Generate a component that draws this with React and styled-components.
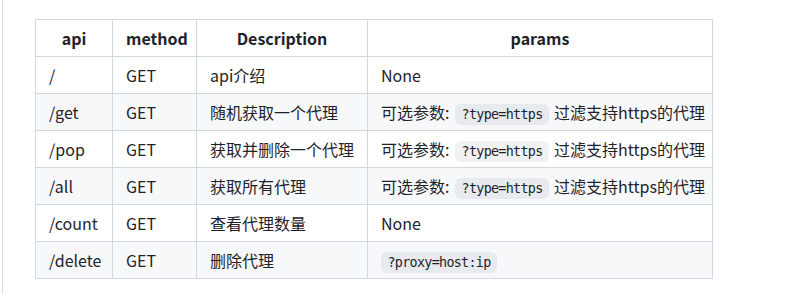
import React from "react";
import styled, { createGlobalStyle } from "styled-components";

const GlobalStyle = createGlobalStyle`
  html, body {
    margin: 0;
    background: #ffffff;
  }
  body {
    font-family: "Noto Sans CJK SC", "Noto Sans", sans-serif;
    color: #1f2328;
  }
`;

const Page = styled.div`
  height: 294px;
  margin-left: 2px;
  border-left: 1px solid #dcdcdc;
  padding: 19px 0 0 32px;
  box-sizing: border-box;
`;

const Table = styled.table`
  border-collapse: collapse;
  border-spacing: 0;
  table-layout: fixed;
  width: 677px;
  font-size: 16px;
  line-height: 24px;

  tbody tr:nth-child(2n) {
    background: #f6f8fa;
  }
`;

const HeadCell = styled.th`
  box-sizing: border-box;
  width: ${({ $width }) => $width}px;
  border: 1px solid #d1d9e0;
  padding: 6px 13px;
  font-weight: 600;
  text-align: center;
  white-space: nowrap;
`;

const Cell = styled.td`
  border: 1px solid #d1d9e0;
  padding: 6px 13px;
  text-align: left;
  white-space: nowrap;
`;

const CellLine = styled.div`
  height: 24px;
  line-height: 24px;
`;

const Code = styled.code`
  font-family: "DejaVu Sans Mono", "Liberation Mono", monospace;
  font-size: 13.4px;
  letter-spacing: -0.7px;
  line-height: 1;
  padding: 3px 6px 3px 6.5px;
  margin: 0 ${({ $flush }) => ($flush ? "0" : "2px")};
  background: rgba(175, 184, 193, 0.2);
  border-radius: 6px;
`;

const filterParam = (
  <>
    可选参数: <Code>?type=https</Code> 过滤支持https的代理
  </>
);

const columns = [
  { label: "api", width: 77 },
  { label: "method", width: 84 },
  { label: "Description", width: 171 },
  { label: "params", width: 345 },
];

const rows = [
  { api: "/", method: "GET", desc: "api介绍", params: "None" },
  { api: "/get", method: "GET", desc: "随机获取一个代理", params: filterParam },
  { api: "/pop", method: "GET", desc: "获取并删除一个代理", params: filterParam },
  { api: "/all", method: "GET", desc: "获取所有代理", params: filterParam },
  { api: "/count", method: "GET", desc: "查看代理数量", params: "None" },
  {
    api: "/delete",
    method: "GET",
    desc: "删除代理",
    params: <Code $flush>?proxy=host:ip</Code>,
  },
];

const App = () => {
  return (
    <>
      <GlobalStyle />
      <Page>
        <Table>
          <thead>
            <tr>
              {columns.map((col) => (
                <HeadCell key={col.label} $width={col.width}>
                  <CellLine>{col.label}</CellLine>
                </HeadCell>
              ))}
            </tr>
          </thead>
          <tbody>
            {rows.map((row) => (
              <tr key={row.api}>
                <Cell>
                  <CellLine>{row.api}</CellLine>
                </Cell>
                <Cell>
                  <CellLine>{row.method}</CellLine>
                </Cell>
                <Cell>
                  <CellLine>{row.desc}</CellLine>
                </Cell>
                <Cell>
                  <CellLine>{row.params}</CellLine>
                </Cell>
              </tr>
            ))}
          </tbody>
        </Table>
      </Page>
    </>
  );
};

export default App;
